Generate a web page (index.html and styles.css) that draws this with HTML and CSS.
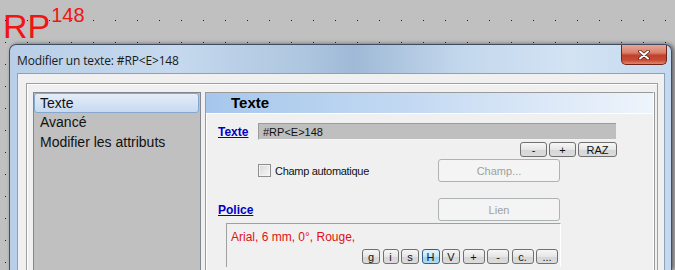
FILE: index.html
```html
<!DOCTYPE html>
<html lang="fr">

<head>
    <meta charset="UTF-8">
    <title>Modifier un texte</title>
    <link rel="stylesheet" href="styles.css">
</head>

<body>
    <div class="canvas">
        <div class="label">RP<sup>148</sup></div>

        <div class="window">
            <div class="titlebar">
                <span class="title">Modifier un texte: #RP&lt;E&gt;148</span>
                <button class="close" type="button">
                    <svg width="12" height="10" viewBox="0 0 12 10">
                        <path d="M2 1.5 L10 8.5 M10 1.5 L2 8.5" stroke="#5a1e14" stroke-width="3.6" stroke-linecap="round" />
                        <path d="M2 1.5 L10 8.5 M10 1.5 L2 8.5" stroke="#fff" stroke-width="2" stroke-linecap="round" />
                    </svg>
                </button>
            </div>

            <div class="client">
                <div class="group">
                    <ul class="nav">
                        <li class="active">Texte</li>
                        <li>Avancé</li>
                        <li>Modifier les attributs</li>
                    </ul>

                    <div class="panel">
                        <div class="panel-head">Texte</div>
                        <div class="panel-body">
                            <div class="row">
                                <a class="link" href="#">Texte</a>
                                <div class="field">#RP&lt;E&gt;148</div>
                            </div>

                            <div class="tools">
                                <button type="button" class="mini w27">-</button>
                                <button type="button" class="mini w27">+</button>
                                <button type="button" class="mini w39">RAZ</button>
                            </div>

                            <div class="row auto-row">
                                <label class="check-label"><span class="check"></span>Champ automatique</label>
                                <button type="button" class="wide" disabled>Champ...</button>
                            </div>

                            <div class="row police-row">
                                <a class="link" href="#">Police</a>
                                <button type="button" class="wide" disabled>Lien</button>
                            </div>

                            <div class="font-box">
                                <div class="font-desc">Arial, 6 mm, 0°, Rouge,</div>
                                <div class="style-btns">
                                    <button type="button" class="mini w18">g</button>
                                    <button type="button" class="mini w16">i</button>
                                    <button type="button" class="mini w18">s</button>
                                    <button type="button" class="mini w18 on">H</button>
                                    <button type="button" class="mini w18">V</button>
                                    <button type="button" class="mini w22">+</button>
                                    <button type="button" class="mini w22">-</button>
                                    <button type="button" class="mini w22">c.</button>
                                    <button type="button" class="mini w22">...</button>
                                </div>
                            </div>
                        </div>
                    </div>
                </div>
            </div>
        </div>
    </div>
</body>

</html>
```

FILE: styles.css
```css
html,
body {
    margin: 0;
    height: 270px;
    overflow: hidden;
}

.canvas {
    height: 270px;
    background-color: #c0c0c0;
    background-image:
        linear-gradient(to bottom, transparent 1px, #c0c0c0 1px),
        linear-gradient(to right, #202020 1px, transparent 1px);
    background-size: 22px 22px;
    background-position: 5px 20px;
    font-family: "Liberation Sans", Arial, sans-serif;
}

.label {
    height: 44px;
    padding-left: 3px;
    color: #f01414;
    font-size: 34px;
    line-height: 38px;
}

.label sup {
    font-size: 20px;
    position: relative;
    top: -4px;
    margin-left: 1px;
}

.window {
    margin-left: 9px;
    width: 663px;
    height: 226px;
    box-sizing: border-box;
    border: 1px solid #3e4e60;
    border-bottom: 0;
    border-radius: 7px 7px 0 0;
    padding: 0 6px 0 7px;
    background: linear-gradient(to right, #b8cfe7 0%, #c6d9ee 25%, #adc5df 45%, #9fb9d6 52%, #c3d7ec 68%, #d3e3f4 85%, #c4d8ee 100%);
    box-shadow: 2px 0 4px rgba(30, 30, 40, 0.6);
}

.titlebar {
    height: 28px;
    display: flex;
    align-items: flex-start;
}

.title {
    margin-top: 7px;
    font-family: "Open Sans", "Noto Sans", sans-serif;
    font-size: 12px;
    letter-spacing: -0.15px;
    color: #1a1a1a;
}

.close {
    margin-left: auto;
    margin-right: -2px;
    width: 46px;
    height: 20px;
    padding: 0;
    border: 1px solid #6e2418;
    border-top: 0;
    border-radius: 0 0 5px 5px;
    background: linear-gradient(to bottom, #e8a697 0%, #d9806d 40%, #c2412c 55%, #c94a33 80%, #dd8a6e 100%);
    display: flex;
    align-items: center;
    justify-content: center;
}

.client {
    height: 198px;
    background: #f0f0f0;
    border: 1px solid #8da2b9;
    border-bottom: 0;
    display: flex;
    flex-direction: column;
}

.group {
    flex: 1;
    margin: 9px 6px 0 8px;
    border: 1px solid #a0a0a0;
    border-bottom: 0;
    box-shadow: inset 1px 1px 0 #fff;
    padding: 8px 3px 0 6px;
    display: flex;
    gap: 4px;
}

.nav {
    list-style: none;
    margin: 0;
    padding: 0;
    width: 168px;
    box-sizing: border-box;
    border: 1px solid #82878f;
    border-bottom: 0;
    background: #c0c0c0;
    font-size: 14px;
    color: #111;
}

.nav li {
    height: 20px;
    line-height: 19px;
    padding-left: 6px;
    box-sizing: border-box;
}

.nav li.active {
    margin: 0 1px 0 0;
    border: 1px solid #86a7cf;
    border-radius: 3px;
    padding-left: 5px;
    background: linear-gradient(to bottom, #e4edf8, #c7daf1);
}

.panel {
    flex: 1;
    border-left: 1px solid #9a9a9a;
    border-top: 1px solid #9a9a9a;
    border-right: 1px solid #fff;
    box-shadow: 1px 0 0 #9a9a9a;
    display: flex;
    flex-direction: column;
}

.panel-head {
    height: 20px;
    line-height: 20px;
    padding-left: 25px;
    font-size: 15px;
    font-weight: bold;
    color: #000;
    background: linear-gradient(to right, #a6c7ec 0%, #c3d9f2 45%, #eef4fb 100%);
    border-bottom: 1px solid #fff;
}

.panel-body {
    flex: 1;
    padding: 9px 0 0 11px;
    font-size: 11px;
    border-left: 1px solid #fff;
}

.row {
    display: flex;
    align-items: center;
}

.link {
    width: 40px;
    font-size: 12px;
    font-weight: bold;
    color: #0000c8;
}

.field {
    width: 358px;
    height: 17px;
    box-sizing: border-box;
    padding-left: 4px;
    line-height: 16px;
    background: #bfbfbf;
    border-top: 1px solid #9c9c9c;
    border-left: 1px solid #9c9c9c;
    border-bottom: 1px solid #f4f4f4;
    color: #111;
}

.tools {
    width: 399px;
    margin-top: 2px;
    display: flex;
    justify-content: flex-end;
    gap: 2px;
}

.mini {
    height: 15px;
    padding: 0;
    box-sizing: border-box;
    border: 1px solid #707070;
    border-radius: 3px;
    background: linear-gradient(to bottom, #f6f6f6 0%, #e6e6e6 50%, #d6d6d6 51%, #dcdcdc 100%);
    font-family: "Liberation Sans", Arial, sans-serif;
    font-size: 11px;
    line-height: 12px;
    color: #111;
}

.mini.on {
    border-color: #2c628b;
    background: linear-gradient(to bottom, #e5f4fc 0%, #c4e5f6 50%, #98d1ef 51%, #b3dbf2 100%);
}

.w16 { width: 16px; }
.w18 { width: 18px; }
.w22 { width: 22px; }
.w27 { width: 27px; }
.w39 { width: 39px; }

.auto-row {
    margin-top: 2px;
}

.check-label {
    width: 220px;
    padding-left: 40px;
    box-sizing: border-box;
    display: flex;
    align-items: center;
    gap: 4px;
    font-size: 11px;
    letter-spacing: -0.3px;
    color: #111;
}

.check {
    width: 13px;
    height: 13px;
    box-sizing: border-box;
    border: 1px solid #8e8f8f;
    background: linear-gradient(135deg, #d8d8d8, #f8f8f8);
    box-shadow: inset 0 0 0 1px #f4f4f4;
}

.wide {
    width: 122px;
    height: 23px;
    border: 1px solid #adb2b5;
    border-radius: 3px;
    background: #f4f4f4;
    font-family: "Liberation Sans", Arial, sans-serif;
    font-size: 11px;
    color: #a0a0a0;
}

.police-row {
    margin-top: 16px;
}

.police-row .link {
    width: 220px;
}

.font-box {
    margin: 2px 0 0 8px;
    width: 335px;
    height: 44px;
    box-sizing: border-box;
    border-top: 1px solid #a0a0a0;
    border-left: 1px solid #a0a0a0;
    border-right: 1px solid #fff;
    padding: 3px 2px 0 4px;
}

.font-desc {
    font-size: 12px;
    line-height: 20px;
    color: #e01010;
}

.style-btns {
    margin-top: 2px;
    display: flex;
    justify-content: flex-end;
    gap: 2.5px;
}
```
